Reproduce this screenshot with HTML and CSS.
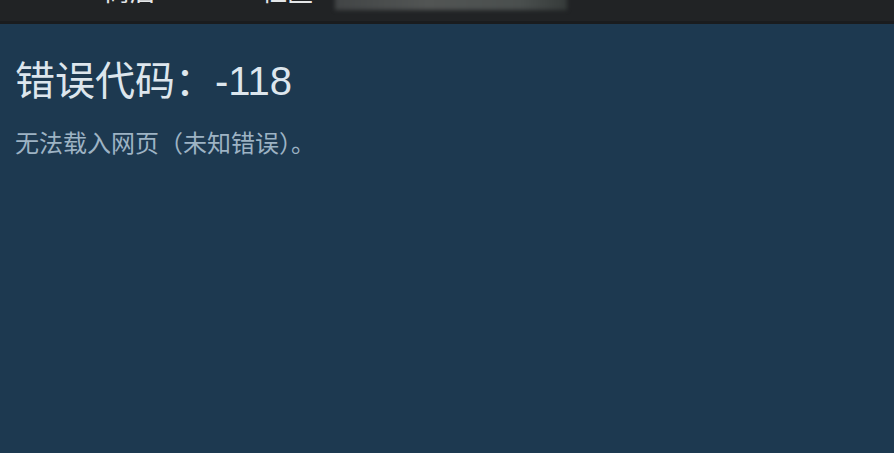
FILE: index.html
```html
<!DOCTYPE html>
<html lang="zh-CN">
<head>
    <meta charset="UTF-8">
    <meta name="viewport" content="width=device-width, initial-scale=1.0">
    <title>错误</title>
    <link rel="stylesheet" href="styles.css">
</head>
<body>
    <div class="topbar">
        <nav class="nav">
            <span class="nav-item">商店</span>
            <span class="nav-item">社区</span>
            <span class="nav-user"></span>
        </nav>
    </div>

    <div class="error-page">
        <h1 class="error-code">错误代码：-118</h1>
        <p class="error-desc">无法载入网页（未知错误）。</p>
    </div>
</body>
</html>
```

FILE: styles.css
```css
html, body {
    margin: 0;
    padding: 0;
    height: 100%;
}
body {
    font-family: Arial, "Liberation Sans", "Noto Sans CJK SC", sans-serif;
    background-color: #1d3950;
    overflow: hidden;
}
.topbar {
    height: 21px;
    background-color: #212325;
    border-bottom: 3px solid #1a1c1e;
    overflow: hidden;
}
.nav {
    display: flex;
    align-items: flex-start;
    margin-top: -22px;
    margin-left: 104px;
}
.nav-item {
    font-size: 26px;
    line-height: 28px;
    color: #e4e6e8;
    margin-right: 105px;
}
.nav-user {
    width: 232px;
    height: 32px;
    margin-left: -83px;
    background: linear-gradient(90deg, #424546, #525554 40%, #4a4f4e 80%, #363b3a);
    filter: blur(2px);
}
.error-page {
    padding: 33px 15px 0;
}
.error-code {
    margin: 0;
    font-size: 40px;
    font-weight: normal;
    line-height: 48px;
    color: #dde6ed;
}
.error-desc {
    margin: 24px 0 0;
    font-size: 24px;
    line-height: 30px;
    color: #9db3c4;
}
```
